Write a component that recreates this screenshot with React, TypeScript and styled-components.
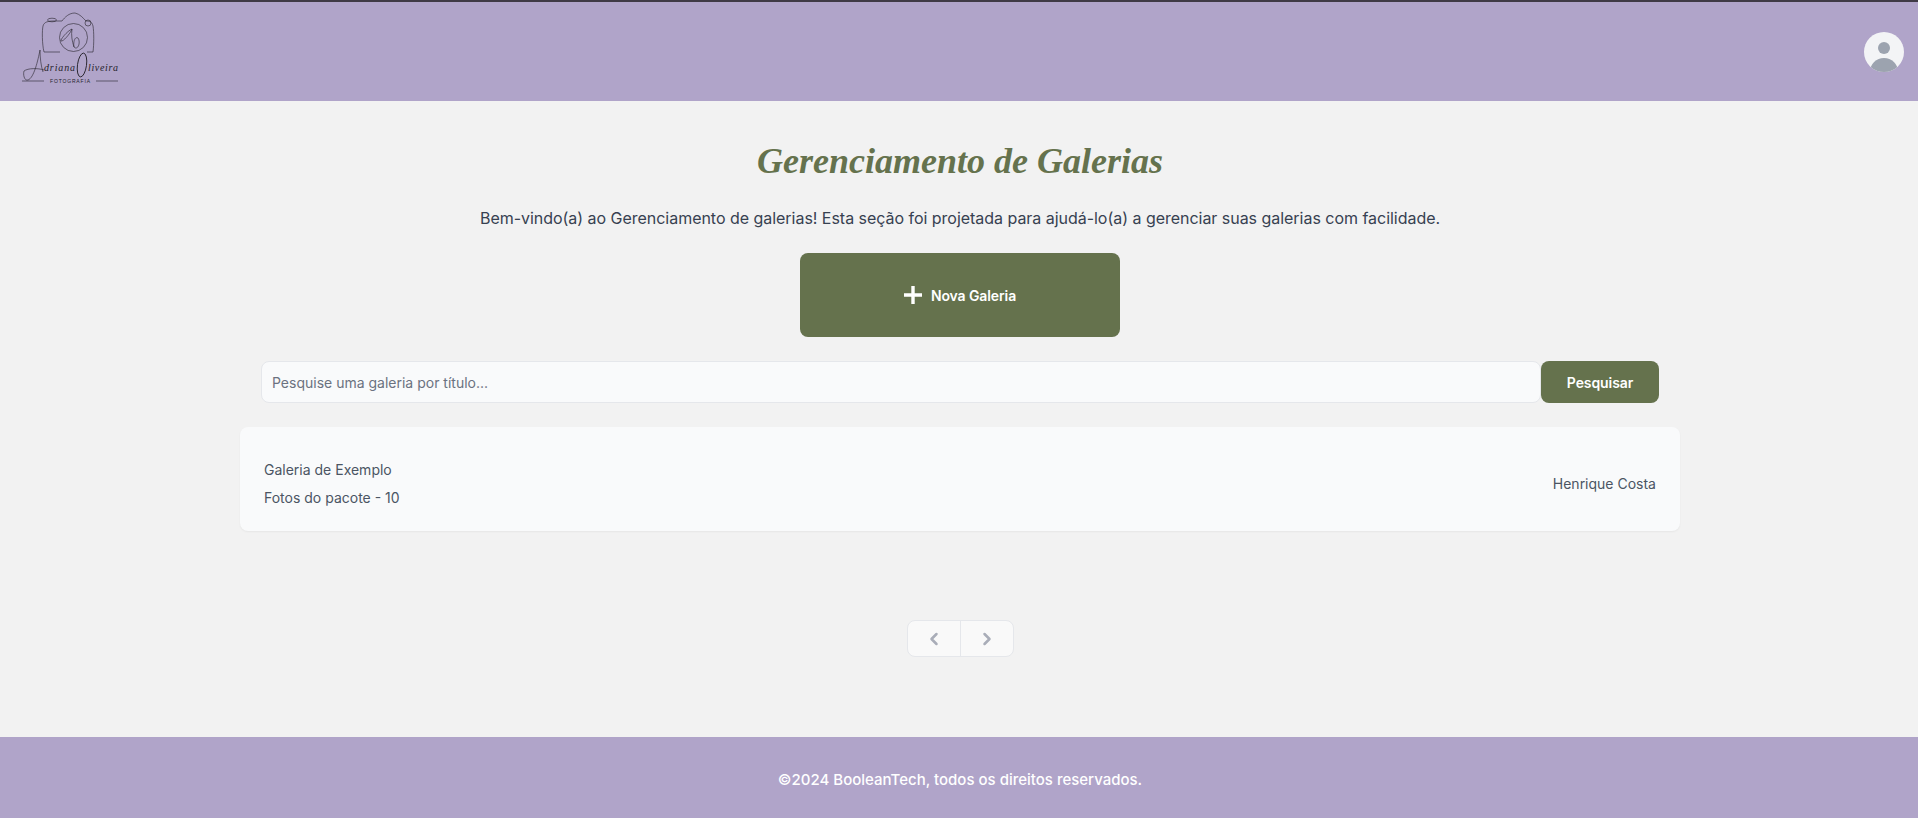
import { createGlobalStyle, styled } from "styled-components";
import { ChevronLeft, ChevronRight } from "lucide-react";

const GlobalStyle = createGlobalStyle`
  html, body {
    margin: 0;
    padding: 0;
    background: #f2f2f2;
    font-family: Inter, "Noto Sans", sans-serif;
  }
  * {
    box-sizing: border-box;
  }
`;

const Logo = () => (
  <LogoSvg viewBox="18 12 110 80" aria-label="Adriana Oliveira Fotografia">
    <g fill="none" stroke="#26232b" strokeWidth="0.6">
      <path d="M44 52 C42 44 42 30 43 26 C44 22 48 21 54 21 L62 21 C65 17 69 13 75 13 C80 14 83 18 86 21 C90 21 92 22 93 26 C94 32 94 44 93 52" />
      <path d="M44 52 L60 52 M87 52 L93 52" />
      <ellipse cx="52" cy="20" rx="4.5" ry="1.8" />
      <circle cx="88" cy="23" r="3" />
      <circle cx="73.5" cy="37.5" r="14" />
      <path d="M72 29 C67 31 60 40 61 41 C63 42 70 34 72 29 C71 35 72 41 74 47 C78 51 81 42 78 38 C75 36 73 42 74 47" />
      <path d="M40 50 C38 60 34 78 28 80 C24 81 23 74 24 71 C28 68 38 68 44 70" />
      <path d="M40 50 C40 58 41 66 43 72" />
      <ellipse cx="82" cy="65" rx="4.5" ry="12" strokeWidth="0.9" transform="rotate(8 82 65)" />
      <path d="M22 81 L44 81 M96 81 L118 81" />
    </g>
    <LogoScript x="44" y="71" textLength="31">
      driana
    </LogoScript>
    <LogoScript x="88" y="71" textLength="30">
      liveira
    </LogoScript>
    <LogoCaption x="50" y="83" textLength="40">
      FOTOGRAFIA
    </LogoCaption>
  </LogoSvg>
);

const App = () => {
  return (
    <Page>
      <GlobalStyle />
      <Header>
        <Logo />
        <Avatar viewBox="0 0 40 40" aria-label="Perfil">
          <defs>
            <clipPath id="avatar-clip">
              <circle cx="20" cy="20" r="20" />
            </clipPath>
          </defs>
          <circle cx="20" cy="20" r="20" fill="#f3f4f6" />
          <g clipPath="url(#avatar-clip)" fill="#9ca3af">
            <circle cx="20" cy="16" r="6" />
            <ellipse cx="20" cy="40" rx="14" ry="14" />
          </g>
        </Avatar>
      </Header>
      <Main>
        <Title>Gerenciamento de Galerias</Title>
        <Intro>
          Bem-vindo(a) ao Gerenciamento de galerias! Esta seção foi projetada
          para ajudá-lo(a) a gerenciar suas galerias com facilidade.
        </Intro>
        <NewButton>
          <PlusIcon viewBox="0 0 18 18">
            <path d="M9 0v18M0 9h18" />
          </PlusIcon>
          Nova Galeria
        </NewButton>
        <SearchRow>
          <SearchInput placeholder="Pesquise uma galeria por título..." />
          <SearchButton>Pesquisar</SearchButton>
        </SearchRow>
        <Card>
          <CardInfo>
            <CardText>Galeria de Exemplo</CardText>
            <CardText>Fotos do pacote - 10</CardText>
          </CardInfo>
          <CardText>Henrique Costa</CardText>
        </Card>
        <Pagination>
          <PageButton aria-label="Anterior">
            <ChevronLeft size={20} strokeWidth={3} />
          </PageButton>
          <PageButton aria-label="Próxima">
            <ChevronRight size={20} strokeWidth={3} />
          </PageButton>
        </Pagination>
      </Main>
      <Footer>©2024 BooleanTech, todos os direitos reservados.</Footer>
    </Page>
  );
};

const Page = styled.div`
  min-height: 818px;
  display: flex;
  flex-direction: column;
`;

const Header = styled.header`
  height: 101px;
  flex: none;
  display: flex;
  align-items: center;
  justify-content: space-between;
  padding: 0 14px 0 18px;
  background: #b0a4c9;
  border-top: 2px solid #3f3a45;
`;

const LogoSvg = styled.svg`
  width: 110px;
  height: 80px;
`;

const LogoScript = styled.text`
  font-family: "Liberation Serif", serif;
  font-style: italic;
  font-size: 10px;
  fill: #26232b;
`;

const LogoCaption = styled.text`
  font-family: "Liberation Sans", sans-serif;
  font-size: 5px;
  fill: #26232b;
`;

const Avatar = styled.svg`
  width: 40px;
  height: 40px;
`;

const Main = styled.main`
  flex: 1;
  display: flex;
  flex-direction: column;
  align-items: center;
  padding: 40px 0 0 2px;
`;

const Title = styled.h1`
  margin: 0;
  font-family: "Liberation Serif", serif;
  font-style: italic;
  font-weight: 700;
  font-size: 36px;
  line-height: 40px;
  color: #65724d;
`;

const Intro = styled.p`
  margin: 25px 0 0;
  font-size: 16px;
  line-height: 24px;
  letter-spacing: -0.03px;
  color: #374151;
`;

const NewButton = styled.button`
  margin-top: 23px;
  width: 320px;
  height: 84px;
  display: flex;
  align-items: center;
  justify-content: center;
  gap: 9px;
  border: none;
  border-radius: 8px;
  background: #65724d;
  color: #fff;
  font-family: inherit;
  font-size: 14px;
  font-weight: 600;
  letter-spacing: -0.1px;
`;

const PlusIcon = styled.svg`
  width: 18px;
  height: 18px;
  fill: none;
  stroke: #fff;
  stroke-width: 3.4;
`;

const SearchRow = styled.div`
  margin-top: 24px;
  width: 1398px;
  height: 42px;
  display: flex;
`;

const SearchInput = styled.input`
  flex: 1;
  padding: 0 10px;
  background: #f9fafb;
  border: 1px solid #e5e7eb;
  border-radius: 8px;
  font-family: inherit;
  font-size: 14px;
  color: #1f2937;
  outline: none;

  &::placeholder {
    color: #6b7280;
    opacity: 1;
  }
`;

const SearchButton = styled.button`
  width: 118px;
  border: none;
  border-radius: 8px;
  background: #65724d;
  color: #fff;
  font-family: inherit;
  font-size: 14px;
  font-weight: 600;
  letter-spacing: -0.1px;
`;

const Card = styled.section`
  margin-top: 24px;
  width: 1440px;
  height: 104px;
  display: flex;
  align-items: center;
  justify-content: space-between;
  padding: 10px 24px 0;
  background: #f9fafb;
  border-radius: 8px;
  box-shadow: 0 1px 2px rgba(0, 0, 0, 0.05);
`;

const CardInfo = styled.div`
  display: flex;
  flex-direction: column;
  gap: 8px;
`;

const CardText = styled.span`
  font-size: 14px;
  line-height: 20px;
  color: #4b5563;
`;

const Pagination = styled.nav`
  margin-top: 89px;
  height: 37px;
  display: flex;
  border: 1px solid #e5e7eb;
  border-radius: 8px;
  overflow: hidden;
  background: #f9f9f9;
`;

const PageButton = styled.button`
  width: 52.5px;
  display: flex;
  align-items: center;
  justify-content: center;
  border: none;
  background: transparent;
  color: #a9adb8;
  padding: 0;

  & + & {
    border-left: 1px solid #e5e7eb;
  }
`;

const Footer = styled.footer`
  flex: none;
  height: 81px;
  display: flex;
  align-items: center;
  justify-content: center;
  padding: 3px 0 0 2px;
  background: #b0a4c9;
  color: #fff;
  font-size: 15px;
  font-weight: 500;
`;

export default App;
